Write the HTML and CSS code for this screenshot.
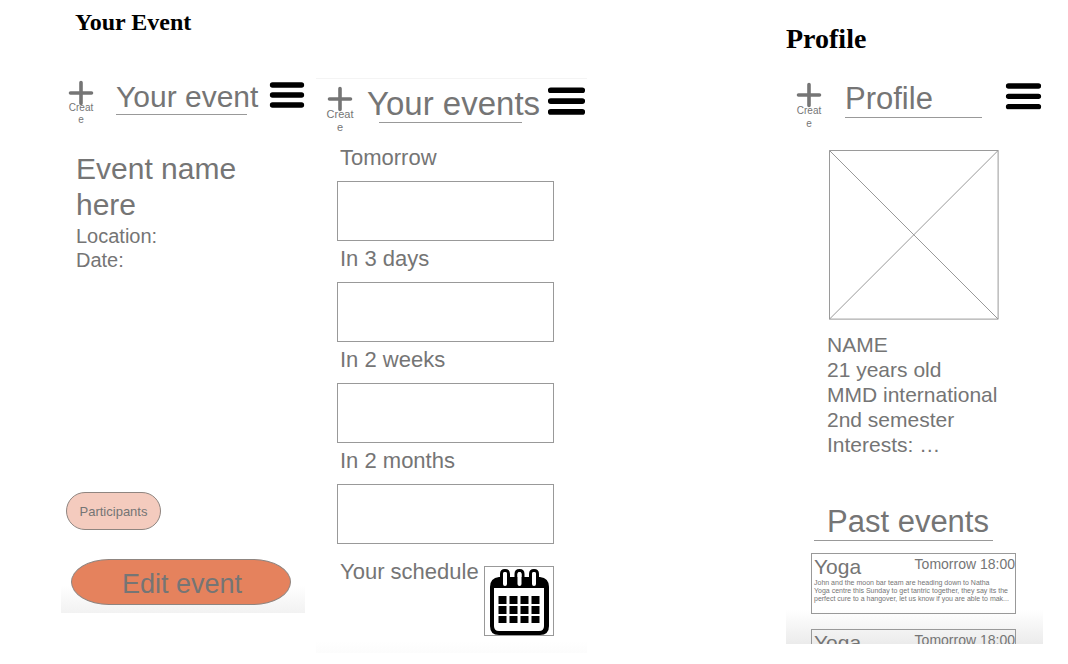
FILE: index.html
```html
<!DOCTYPE html>
<html lang="en">
<head>
<meta charset="utf-8">
<meta name="viewport" content="width=device-width, initial-scale=1">
<title>Event wireframes</title>
<link rel="stylesheet" href="styles.css">
</head>
<body>
<svg class="symbols" aria-hidden="true">
  <symbol id="plus" viewBox="0 0 26 26"><path d="M13 2.500v21M2.500 13h21" fill="none" stroke="currentColor" stroke-width="3.600" stroke-linecap="round"/></symbol>
  <symbol id="menu" viewBox="0 0 36 26"><path d="M3.500 3h29M3.500 13h29M3.500 23h29" fill="none" stroke="currentColor" stroke-width="5.300" stroke-linecap="round"/></symbol>
</svg>
<main class="board">
  <section class="column column-event">
    <h1 class="caption">Your Event</h1>
    <div class="screen screen-event">
      <header class="topbar">
        <button class="create" type="button"><svg class="plus"><use href="#plus"/></svg>Create</button>
        <h2 class="title">Your event</h2>
        <button class="menu" type="button" aria-label="Menu"><svg viewBox="0 0 36 26"><use href="#menu"/></svg></button>
      </header>
      <div class="details">
        <h3 class="event-name">Event name here</h3>
        <p>Location:</p>
        <p>Date:</p>
      </div>
      <div class="actions">
        <button class="participants" type="button">Participants</button>
        <button class="edit" type="button">Edit event</button>
      </div>
    </div>
  </section>

  <section class="column column-list">
    <div class="screen screen-list">
      <header class="topbar">
        <button class="create" type="button"><svg class="plus"><use href="#plus"/></svg>Create</button>
        <h2 class="title">Your events</h2>
        <button class="menu" type="button" aria-label="Menu"><svg viewBox="0 0 36 26"><use href="#menu"/></svg></button>
      </header>
      <div class="agenda">
        <section class="slot"><h3>Tomorrow</h3><div class="slot-box"></div></section>
        <section class="slot"><h3>In 3 days</h3><div class="slot-box"></div></section>
        <section class="slot"><h3>In 2 weeks</h3><div class="slot-box"></div></section>
        <section class="slot"><h3>In 2 months</h3><div class="slot-box"></div></section>
      </div>
      <div class="schedule">
        <h3>Your schedule</h3>
        <button class="calendar" type="button" aria-label="Open schedule">
          <svg viewBox="0 0 68 68">
            <path d="M5 20q0-9 9-10h41q9 1 9 10v39q0 9-9 9H14q-9 0-9-9z"/>
            <path d="M9 21h50v38q0 5-5 5H14q-5 0-5-5z" fill="#fff"/>
            <path d="M16.500 16V7q0-3.500 3.500-3.500T23.500 7v9M31 16V7q0-3.500 3.500-3.500T38 7v9M45.500 16V7q0-3.500 3.500-3.500T52.500 7v9" fill="none" stroke="#000" stroke-width="3"/>
            <path d="M18 7q0-2 2-2t2 2v10q0 2-2 2t-2-2zM32.500 7q0-2 2-2t2 2v10q0 2-2 2t-2-2zM47 7q0-2 2-2t2 2v10q0 2-2 2t-2-2z" fill="#fff"/>
            <path d="M13.500 29h8v8h-8zM24.500 29h8v8h-8zM35.500 29h8v8h-8zM46.500 29h8v8h-8zM13.500 39h8v8h-8zM24.500 39h8v8h-8zM35.500 39h8v8h-8zM46.500 39h8v8h-8zM13.500 49h8v7h-8zM24.500 49h8v7h-8zM35.500 49h8v7h-8zM46.500 49h8v7h-8z"/>
          </svg>
        </button>
      </div>
    </div>
  </section>

  <section class="column column-profile">
    <h1 class="caption caption-profile">Profile</h1>
    <div class="screen screen-profile">
      <header class="topbar">
        <button class="create" type="button"><svg class="plus"><use href="#plus"/></svg>Create</button>
        <h2 class="title">Profile</h2>
        <button class="menu" type="button" aria-label="Menu"><svg viewBox="0 0 36 26"><use href="#menu"/></svg></button>
      </header>
      <svg class="photo" viewBox="0 0 170 170" role="img" aria-label="Profile photo placeholder"><path d="M.5.5h169v169H.5zl169 169M169.500.5l-169 169" fill="none" stroke="#999"/></svg>
      <div class="bio">
        <p>NAME</p>
        <p>21 years old</p>
        <p>MMD international</p>
        <p>2nd semester</p>
        <p>Interests: …</p>
      </div>
      <section class="past">
        <h2 class="past-title">Past events</h2>
        <div class="cards">
          <article class="card">
            <div class="card-head"><h3>Yoga</h3><time>Tomorrow 18:00</time></div>
            <p>John and the moon bar team are heading down to Natha<br>Yoga centre this Sunday to get tantric together, they say its the<br>perfect cure to a hangover, let us know if you are able to mak...</p>
          </article>
          <article class="card">
            <div class="card-head"><h3>Yoga</h3><time>Tomorrow 18:00</time></div>
          </article>
        </div>
      </section>
    </div>
  </section>
</main>
</body>
</html>
```

FILE: styles.css
```css
* { box-sizing: border-box; }

body {
  margin: 0;
  background: #fff;
  color: #757575;
  font-family: "Liberation Sans", Arial, sans-serif;
}

h1, h2, h3, p { margin: 0; font-weight: 400; }

button {
  padding: 0;
  border: 0;
  background: none;
  color: inherit;
  font-family: inherit;
  cursor: pointer;
}

.symbols { position: absolute; width: 0; height: 0; }

.board {
  display: grid;
  grid-template-columns: minmax(0, 255fr) minmax(0, 470fr) minmax(0, 257fr);
  align-items: start;
  padding: 0 25px 0 61px;
}

.column-event { padding-right: 11px; }
.column-list { padding: 78px 199px 0 0; }

.caption {
  padding: 8px 0 0 14px;
  color: #000;
  font: 700 24px/28px "Liberation Serif", "Times New Roman", serif;
}

.caption-profile { padding: 24px 0 0; font-size: 28px; line-height: 30px; }

/* Shared top bar */
.topbar { display: flex; align-items: flex-start; }

.create {
  flex: none;
  width: 26px;
  font-size: 10px;
  line-height: 12px;
  white-space: normal;
  word-break: break-all;
}

.plus { display: block; width: 100%; height: 26px; margin-bottom: -4px; }

.title {
  flex: 1;
  min-width: 0;
  border-bottom: 1px solid #999;
  font-size: 30px;
  line-height: 34px;
  white-space: nowrap;
}

.menu { flex: none; width: 36px; color: #000; }
.menu svg { display: block; width: 100%; }

/* Single event */
.screen-event {
  margin-top: 44px;
  padding-bottom: 8px;
  background: linear-gradient(to top, #f2f2f2, #fff 28px);
}

.screen-event .topbar { gap: 22px; padding-left: 7px; }
.screen-event .menu { padding-top: 2px; }
.details { padding: 25px 14px 0 15px; font-size: 20px; line-height: 24px; }
.event-name { margin-bottom: 1px; font-size: 30px; line-height: 36px; }

.actions {
  display: flex;
  flex-direction: column;
  align-items: flex-start;
  gap: 29px;
  padding: 220px 14px 0 5px;
}

.participants, .edit { border: 1px solid #8f8580; }

.participants {
  width: 95px;
  height: 38px;
  border-radius: 19px;
  background: #f4cbbe;
  font-size: 13px;
}

.edit {
  align-self: stretch;
  height: 46px;
  margin-left: 5px;
  padding: 4px 0 0 2px;
  border-radius: 38px / 23px;
  background: #e5825d;
  font-size: 27px;
}

/* Event list */
.screen-list {
  padding: 7px 1px 17px 0;
  border-top: 1px solid #f4f4f4;
  background: linear-gradient(to top, #fcfcfc, #fff 12px);
}

.screen-list .topbar { gap: 8px; padding-left: 10px; }
.screen-list .create { width: 28px; margin-right: 5px; font-size: 11px; line-height: 13px; }
.screen-list .title { border: 0; font-size: 33px; line-height: 36px; }
.screen-list .title::after { content: ""; display: block; height: 1px; margin: 0 17px 0 12px; background: #999; }
.screen-list .menu { width: 39px; padding-top: 1px; }

.agenda {
  display: grid;
  gap: 5px;
  padding: 11px 32px 0 21px;
}

.slot h3, .schedule h3 { padding-left: 3px; font-size: 22px; line-height: 26px; }
.slot-box { height: 60px; margin-top: 10px; border: 1px solid #999; }

.schedule {
  display: flex;
  justify-content: space-between;
  align-items: flex-start;
  padding: 15px 32px 0 21px;
}

.schedule h3 { white-space: nowrap; }
.calendar { width: 70px; margin-top: 7px; border: 1px solid #999; color: #000; }
.calendar svg { display: block; width: 100%; }

/* Profile */
.screen-profile {
  margin-top: 26px;
  background: linear-gradient(to top, #ebebeb, #fff 34px);
}

.screen-profile .topbar { gap: 23px; padding: 0 1px 0 10px; }
.screen-profile .create { padding-top: 2px; line-height: 13px; }
.screen-profile .title { font-size: 31px; line-height: 37px; }
.screen-profile .menu { width: 37px; padding-top: 3px; }
.photo { display: block; width: 66%; margin: 20px 0 0 43px; }
.bio { padding: 12px 0 0 41px; font-size: 21px; line-height: 25px; }
.past { padding: 47px 27px 0 25px; }

.past-title {
  margin: 0 23px 0 3px;
  padding-left: 13px;
  border-bottom: 1px solid #999;
  font-size: 31px;
  line-height: 36px;
  white-space: nowrap;
}

.cards {
  display: grid;
  align-content: start;
  gap: 15px;
  height: 91px;
  margin-top: 12px;
  overflow: hidden;
}

.card { height: 61px; padding-left: 2px; border: 1px solid #999; }
.card-head { display: flex; justify-content: space-between; align-items: flex-start; }
.card h3 { padding-top: 1px; font-size: 21px; line-height: 24px; }
.card time { font-size: 14px; line-height: 21px; white-space: nowrap; }
.card p { font-size: 7px; line-height: 8px; white-space: nowrap; }
```
